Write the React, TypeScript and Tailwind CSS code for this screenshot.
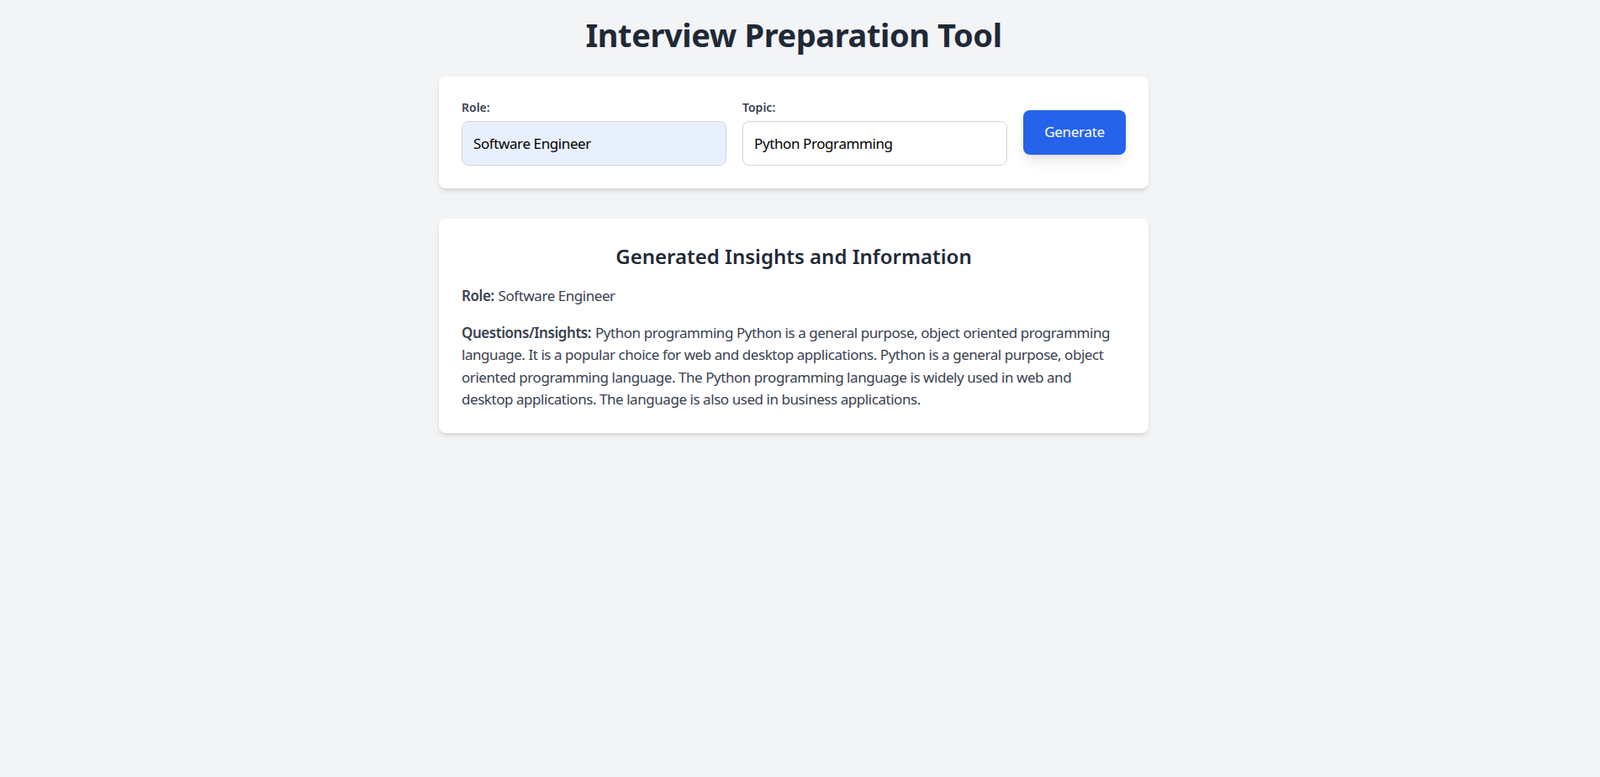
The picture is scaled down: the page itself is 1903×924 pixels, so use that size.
import React from 'react';

export default function App() {
  return (
    <div className="min-h-screen bg-[#f3f4f6] pr-[15px] font-['Noto_Sans',Arial,sans-serif]">
      <div className="mx-auto w-[844px] pt-[18px]">
        <h1 className="text-center text-[38px] font-bold leading-[1.25] tracking-[-0.4px] text-[#1f2937]">
          Interview Preparation Tool
        </h1>

        {/* Form card */}
        <div className="mt-[25px] rounded-lg bg-white px-[27px] py-[27px] shadow-md">
          <div className="flex items-center gap-[19px]">
            <div className="flex-1">
              <label className="mb-[6px] block text-[14px] font-semibold leading-[20px] text-[#374151]">Role:</label>
              <input
                defaultValue="Software Engineer"
                className="block h-[53px] w-full rounded-lg border border-[#d1d5db] bg-[#e8f0fe] px-[13px] text-[17px] tracking-[-0.4px] text-black outline-none"
              />
            </div>
            <div className="flex-1">
              <label className="mb-[6px] block text-[14px] font-semibold leading-[20px] text-[#374151]">Topic:</label>
              <input
                defaultValue="Python Programming"
                className="block h-[53px] w-full rounded-lg border border-[#d1d5db] bg-white px-[13px] text-[17px] tracking-[-0.4px] text-black outline-none"
              />
            </div>
            <button className="h-[53px] w-[122px] shrink-0 rounded-lg bg-[#2563eb] text-[17px] tracking-[-0.3px] text-white shadow-lg">
              Generate
            </button>
          </div>
        </div>

        {/* Results card */}
        <div className="mt-[36px] rounded-lg bg-white px-[27px] pb-[26px] pt-[27px] shadow-md">
          <h2 className="text-center text-[24px] font-semibold leading-[36px] text-[#1f2937]">
            Generated Insights and Information
          </h2>
          <p className="mt-[16px] text-[17px] leading-[26.4px] tracking-[-0.45px] text-[#374151]">
            <strong className="mr-[1px] font-semibold">Role:</strong> Software Engineer
          </p>
          <p className="mt-[18px] text-[17px] leading-[26.4px] tracking-[-0.45px] text-[#374151]">
            <strong className="mr-[1px] font-semibold">Questions/Insights:</strong> Python programming Python is a general
            purpose, object oriented programming language. It is a popular choice for web and desktop applications.
            Python is a general purpose, object oriented programming language. The Python programming language is
            widely used in web and desktop applications. The language is also used in business applications.
          </p>
        </div>
      </div>
    </div>
  );
}
